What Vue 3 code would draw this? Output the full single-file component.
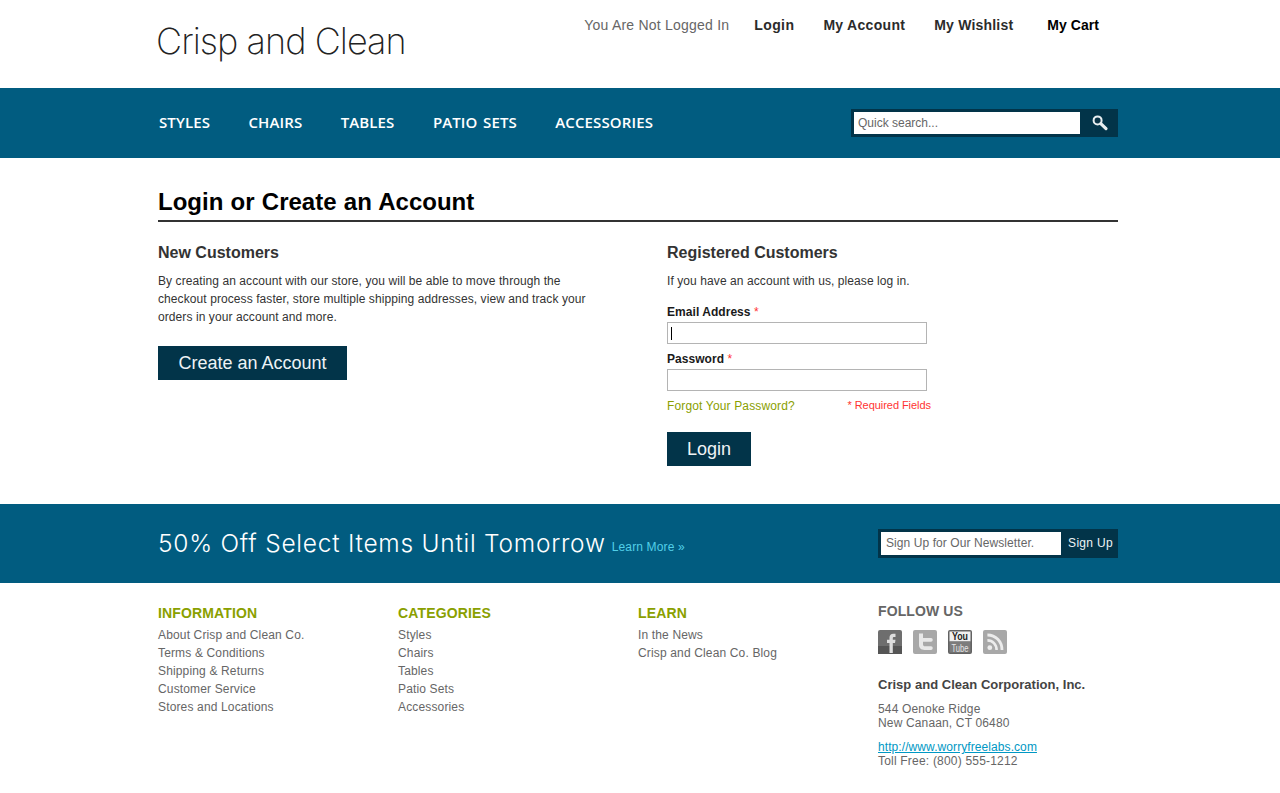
<script setup>
const navItems = ['STYLES', 'CHAIRS', 'TABLES', 'PATIO SETS', 'ACCESSORIES']
const columns = [
  { title: 'INFORMATION', links: ['About Crisp and Clean Co.', 'Terms & Conditions', 'Shipping & Returns', 'Customer Service', 'Stores and Locations'] },
  { title: 'CATEGORIES', links: ['Styles', 'Chairs', 'Tables', 'Patio Sets', 'Accessories'] },
  { title: 'LEARN', links: ['In the News', 'Crisp and Clean Co. Blog'] }
]
</script>

<template>
  <div class="page">
    <header class="top wrap">
      <div class="logo">Crisp and Clean</div>
      <div class="toplinks">
        <span class="status">You Are Not Logged In</span>
        <a class="tl tl-login">Login</a>
        <a class="tl tl-account">My Account</a>
        <a class="tl tl-wish">My Wishlist</a>
        <a class="tl tl-cart">My Cart</a>
      </div>
    </header>

    <div class="bar navbar">
      <div class="wrap navrow">
        <nav class="nav">
          <a v-for="n in navItems" :key="n">{{ n }}</a>
        </nav>
        <div class="search">
          <div class="field">Quick search...</div>
          <div class="searchbtn">
            <svg width="18" height="18" viewBox="0 0 18 18">
              <circle cx="6.6" cy="6.4" r="4" fill="#0a3346" stroke="#e8eef0" stroke-width="2" />
              <path d="M9.8 9.6 L15 14.6" stroke="#e8eef0" stroke-width="3.2" stroke-linecap="round" />
            </svg>
          </div>
        </div>
      </div>
    </div>

    <main class="wrap main">
      <h1 class="title">Login or Create an Account</h1>
      <div class="cols">
        <section class="new">
          <h2>New Customers</h2>
          <p class="copy">By creating an account with our store, you will be able to move through the checkout process faster, store multiple shipping addresses, view and track your orders in your account and more.</p>
          <button class="btn btn-create">Create an Account</button>
        </section>
        <section class="reg">
          <h2>Registered Customers</h2>
          <p class="copy one">If you have an account with us, please log in.</p>
          <label class="lab lab-first">Email Address <em>*</em></label>
          <div class="input"><span class="caret"></span></div>
          <label class="lab">Password <em>*</em></label>
          <div class="input"></div>
          <div class="formfoot">
            <a class="forgot">Forgot Your Password?</a>
            <span class="req">* Required Fields</span>
          </div>
          <button class="btn btn-login">Login</button>
        </section>
      </div>
    </main>

    <div class="bar promo">
      <div class="wrap promorow">
        <div class="promotext">
          <span class="deal">50% Off Select Items Until Tomorrow</span>
          <a class="more">Learn More »</a>
        </div>
        <div class="signup">
          <div class="field2">Sign Up for Our Newsletter.</div>
          <div class="signbtn">Sign Up</div>
        </div>
      </div>
    </div>

    <footer class="wrap foot">
      <div v-for="c in columns" :key="c.title" class="fcol">
        <h3>{{ c.title }}</h3>
        <a v-for="l in c.links" :key="l">{{ l }}</a>
      </div>
      <div class="fcol follow">
        <h4>FOLLOW US</h4>
        <div class="social">
          <svg width="24" height="24" viewBox="0 0 24 24">
            <rect width="24" height="24" rx="2" fill="#6e6e6e" />
            <rect y="16" width="24" height="8" fill="#555" />
            <path d="M11.5 23V13H9V9.8H11.5V7.6C11.5 5.2 13 3.8 15.2 3.8H17.5V7H16C15.2 7 14.8 7.5 14.8 8.2V9.8H17.5L17 13H14.8V23Z" fill="#dedede" />
          </svg>
          <svg width="24" height="24" viewBox="0 0 24 24">
            <rect width="24" height="24" rx="2" fill="#a8a8a8" />
            <path d="M6 3.5H10V8H18C19.1 8 19.7 8.8 19.7 9.8S19.1 11.8 18 11.8H10V14.2C10 15.6 10.8 16.2 12 16.2H18C19.1 16.2 19.7 17 19.7 18S19.1 20 18 20H11.5C8 20 6 18 6 14.8Z" fill="#e8e8e8" />
          </svg>
          <svg width="24" height="24" viewBox="0 0 24 24">
            <rect width="24" height="24" rx="2" fill="#626262" />
            <rect x="1.5" y="1.5" width="21" height="10" fill="#f0f0f0" />
            <rect x="1.5" y="11.5" width="21" height="11" fill="#7c7c7c" />
            <text transform="translate(4 10) scale(1 1.3)" textLength="16" lengthAdjust="spacingAndGlyphs" class="yt yt-you">You</text>
            <text transform="translate(3.5 21.5) scale(1 1.3)" textLength="17" lengthAdjust="spacingAndGlyphs" class="yt yt-tube">Tube</text>
          </svg>
          <svg width="24" height="24" viewBox="0 0 24 24">
            <rect width="24" height="24" rx="2" fill="#a8a8a8" />
            <circle cx="6.8" cy="17.7" r="2.4" fill="#ececec" />
            <path d="M4.4 10.4C9.6 10.4 13.6 14.4 13.6 20" fill="none" stroke="#ececec" stroke-width="2.6" />
            <path d="M4.4 5C12.8 5 19 11.4 19 20" fill="none" stroke="#ececec" stroke-width="2.8" />
          </svg>
        </div>
        <div class="corp">Crisp and Clean Corporation, Inc.</div>
        <div class="addr">544 Oenoke Ridge<br />New Canaan, CT 06480</div>
        <div class="contact">
          <a class="url">http://www.worryfreelabs.com</a><br />Toll Free: (800) 555-1212
        </div>
      </div>
    </footer>
  </div>
</template>

<style scoped>
.page {
  font-family: "Liberation Sans", Arial, sans-serif;
  color: #333;
  height: 793px;
  overflow: hidden;
  background: #fff;
}
.wrap { width: 960px; margin-left: 158px; }
.top { height: 88px; display: flex; justify-content: space-between; }
.logo {
  font-family: "Inter", "Liberation Sans", sans-serif;
  font-weight: 200;
  font-size: 36px;
  letter-spacing: -.95px;
  line-height: 42px;
  margin: 20px 0 0 -2px;
  color: #222;
}
.toplinks { display: flex; align-items: flex-start; padding-top: 17px; font-size: 14px; line-height: 17px; }
.status { color: #666; margin-right: 25px; letter-spacing: .22px; }
.tl { font-weight: 700; color: #2b2b2b; letter-spacing: .3px; }
.tl-login { margin-right: 29px; letter-spacing: .4px; }
.tl-account { margin-right: 29px; }
.tl-wish { margin-right: 34px; letter-spacing: .2px; }
.tl-cart { margin-right: 19px; color: #000; letter-spacing: .05px; }
.bar { background: #015c80; }
.navbar { height: 70px; }
.navrow { display: flex; justify-content: space-between; align-items: center; height: 70px; }
.nav { display: flex; gap: 38.4px; padding: 0 0 2px 1px; }
.nav a {
  font-family: "Open Sans", sans-serif;
  font-weight: 600;
  font-size: 15px;
  letter-spacing: .12px;
  word-spacing: 1.6px;
  color: #fff;
  line-height: 20px;
}
.search {
  display: flex;
  width: 267px;
  height: 28px;
  background: #023449;
  padding: 3px 0 3px 3px;
  box-sizing: border-box;
}
.field {
  width: 226px;
  background: #fff;
  font-size: 12px;
  line-height: 22px;
  color: #666;
  padding-left: 4px;
  box-sizing: border-box;
}
.searchbtn { flex: 1; display: flex; align-items: center; justify-content: center; padding-left: 2px; }
.main { height: 346px; padding-top: 28px; box-sizing: border-box; }
.title {
  margin: 0;
  height: 36px;
  box-sizing: border-box;
  border-bottom: 2px solid #333;
  font-size: 24px;
  line-height: 32px;
  font-weight: 700;
  color: #000;
  word-spacing: .6px;
}
.cols { display: flex; padding-top: 21px; }
.new { width: 509px; }
.reg { width: 264px; }
h2 { margin: 0; font-size: 16px; line-height: 20px; font-weight: 700; color: #333; }
.copy { margin: 9px 0 0; font-size: 12px; line-height: 18px; color: #333; width: 440px; letter-spacing: .085px; }
.btn {
  display: block;
  border: 0;
  padding: 0;
  background: #023449;
  color: #eef3f5;
  height: 34px;
  font-family: "Liberation Sans", Arial, sans-serif;
}
.btn-create { width: 189px; margin-top: 20px; font-size: 18px; }
.btn-login { width: 84px; margin-top: 18px; font-size: 18px; }
.lab { display: block; margin-top: 7px; font-size: 12px; line-height: 16px; font-weight: 700; color: #1a1a1a; letter-spacing: .05px; }
.lab-first { margin-top: 14px; }
.lab em { color: #f33; font-style: normal; font-weight: 400; }
.input {
  width: 260px;
  height: 22px;
  border: 1px solid #b4b4b4;
  box-sizing: border-box;
  background: #fff;
  margin-top: 2px;
  position: relative;
}
.caret { position: absolute; left: 3px; top: 4px; width: 1px; height: 13px; background: #000; }
.formfoot { display: flex; justify-content: space-between; margin-top: 7px; line-height: 16px; width: 264px; }
.forgot { font-size: 12px; color: #8aa000; letter-spacing: .15px; }
.req { font-size: 11px; line-height: 14px; color: #f33; letter-spacing: -.05px; }
.promo { height: 79px; }
.promorow { display: flex; justify-content: space-between; padding-top: 25px; box-sizing: border-box; }
.promotext { display: flex; align-items: flex-start; height: 28px; }
.deal {
  font-family: "Inter", sans-serif;
  font-weight: 300;
  font-size: 24.5px;
  line-height: 28px;
  letter-spacing: .75px;
  color: #fff;
}
.more { margin: 11px 0 0 6px; font-size: 12px; line-height: 14px; color: #52cfe8; letter-spacing: .15px; }
.signup { display: flex; width: 240px; height: 29px; background: #023449; padding: 3px 0 3px 3px; box-sizing: border-box; }
.field2 { width: 180px; background: #fff; font-size: 12px; line-height: 23px; color: #666; padding-left: 5px; box-sizing: border-box; letter-spacing: .08px; }
.signbtn { flex: 1; color: #eef3f5; font-size: 12px; line-height: 23px; text-align: center; letter-spacing: .3px; padding-left: 2px; }
.foot { display: flex; padding-top: 21px; }
.fcol { width: 240px; display: flex; flex-direction: column; font-size: 12px; line-height: 18px; color: #666; }
.fcol h3 { margin: 0 0 4px; font-size: 14px; line-height: 18px; font-weight: 700; color: #8aa000; letter-spacing: .15px; }
.fcol a { color: #666; letter-spacing: .15px; }
.follow h4 { margin: -1px 0 0; font-size: 14px; line-height: 16px; color: #666; font-weight: 700; letter-spacing: .1px; }
.social { display: flex; gap: 11px; margin-top: 11px; }
.yt { font-family: "Liberation Sans", sans-serif; font-weight: 700; font-size: 8.5px; }
.yt-you { fill: #222; }
.yt-tube { fill: #e6e6e6; font-weight: 400; }
.corp { margin-top: 22px; font-size: 13px; line-height: 18px; font-weight: 700; color: #444; letter-spacing: .02px; }
.addr { margin-top: 8px; line-height: 14px; letter-spacing: .15px; }
.contact { margin-top: 10px; line-height: 14px; letter-spacing: .2px; }
.fcol a.url { color: #0098c4; text-decoration: underline; letter-spacing: .08px; }
</style>
